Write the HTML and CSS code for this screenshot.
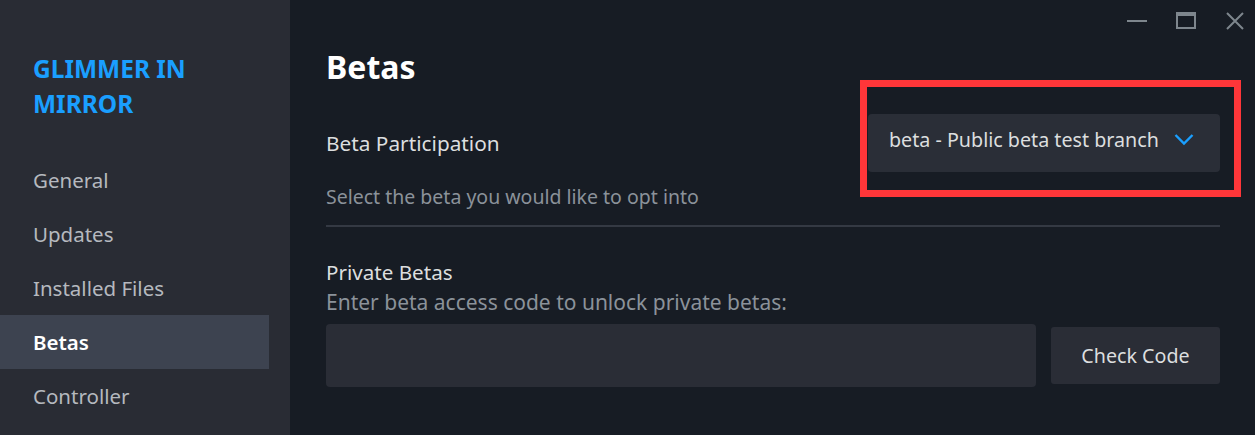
FILE: index.html
```html
<!DOCTYPE html>
<html lang="en">
<head>
  <meta charset="UTF-8" />
  <title>Betas</title>
  <link rel="stylesheet" href="styles.css">
</head>
<body>

<div class="window">
  <!-- Sidebar -->
  <div class="sidebar">
    <h1 class="game-title">GLIMMER IN<br>MIRROR</h1>
    <ul class="nav">
      <li>General</li>
      <li>Updates</li>
      <li>Installed Files</li>
      <li class="active">Betas</li>
      <li>Controller</li>
    </ul>
  </div>

  <!-- Main -->
  <div class="main">
    <div class="titlebar">
      <span class="ctrl">
        <svg width="22" height="22" viewBox="0 0 22 22"><line x1="1" y1="11" x2="21" y2="11" stroke="#7e868d" stroke-width="2"/></svg>
      </span>
      <span class="ctrl">
        <svg width="22" height="22" viewBox="0 0 22 22"><rect x="2" y="3" width="18" height="15" fill="none" stroke="#7e868d" stroke-width="2"/><line x1="1" y1="4.5" x2="21" y2="4.5" stroke="#7e868d" stroke-width="3"/></svg>
      </span>
      <span class="ctrl">
        <svg width="22" height="22" viewBox="0 0 22 22"><path d="M3 3 L19 19 M19 3 L3 19" stroke="#7e868d" stroke-width="2"/></svg>
      </span>
    </div>

    <div class="content">
      <h2>Betas</h2>

      <div class="row">
        <div class="label">Beta Participation</div>
        <div class="dropdown">
          <span>beta - Public beta test branch</span>
          <svg width="20" height="13" viewBox="0 0 20 13"><path d="M1.5 2 L10 10.5 L18.5 2" fill="none" stroke="#1a9fff" stroke-width="2.4"/></svg>
        </div>
      </div>
      <div class="desc">Select the beta you would like to opt into</div>

      <hr class="sep">

      <div class="label private">Private Betas</div>
      <div class="desc code-desc">Enter beta access code to unlock private betas:</div>
      <div class="code-row">
        <input type="text" class="code-input">
        <button class="check-btn">Check Code</button>
      </div>
    </div>
  </div>
</div>

</body>
</html>
```

FILE: styles.css
```css
body {
  margin: 0;
  background: #171c24;
  font-family: 'Noto Sans', sans-serif;
  overflow: hidden;
}

.window {
  display: flex;
  height: 435px;
}

.sidebar {
  width: 290px;
  flex-shrink: 0;
  background: #292c34;
  padding-top: 51px;
  box-sizing: border-box;
}

.game-title {
  margin: 0 0 0 33px;
  color: #1a9fff;
  font-size: 24.5px;
  font-weight: bold;
  line-height: 35px;
}

.nav {
  list-style: none;
  margin: 32px 0 0 0;
  padding: 0;
  width: 269px;
}

.nav li {
  height: 54px;
  line-height: 54px;
  padding-left: 33px;
  font-size: 20.5px;
  color: #b5b9bf;
}

.nav li.active {
  background: #3d4350;
  color: #ffffff;
  font-weight: 600;
}

.main {
  flex: 1;
  background: #171c24;
}

.titlebar {
  display: flex;
  justify-content: flex-end;
  gap: 27px;
  padding: 10px 9px 0 0;
  height: 30px;
}

.ctrl {
  display: flex;
}

.content {
  padding: 0 35px 0 36px;
}

h2 {
  margin: 5px 0 0 0;
  color: #ffffff;
  font-size: 32px;
  font-weight: bold;
  line-height: 44px;
}

.row {
  display: flex;
  justify-content: space-between;
  align-items: center;
  margin-top: 25px;
}

.label {
  color: #dcdedf;
  font-size: 20.8px;
  line-height: 26px;
}

/* red highlight drawn around the dropdown */
.dropdown {
  position: relative;
  display: flex;
  align-items: center;
  gap: 15px;
  width: 352px;
  height: 58px;
  box-sizing: border-box;
  padding: 0 20px 8px 21px;
  background: #2a2e37;
  border-radius: 4px;
  color: #dcdedf;
  font-size: 19.7px;
}

.dropdown::after {
  content: "";
  position: absolute;
  top: -34px;
  left: -8px;
  right: -21px;
  bottom: -25px;
  border: 7px solid #ff3639;
}

.desc {
  margin-top: 12px;
  color: #8b929a;
  font-size: 19.5px;
  line-height: 26px;
}

.sep {
  border: none;
  border-top: 2px solid #343943;
  margin: 15px 0 0 0;
}

.label.private {
  margin-top: 32px;
  font-size: 20.6px;
}

.desc.code-desc {
  margin-top: 4px;
  font-size: 21px;
}

.code-row {
  display: flex;
  align-items: center;
  gap: 15px;
  margin-top: 9px;
}

.code-input {
  flex: 1;
  height: 63px;
  box-sizing: border-box;
  background: #2a2d36;
  border: none;
  border-radius: 4px;
}

.check-btn {
  width: 169px;
  height: 57px;
  background: #2a2d36;
  border: none;
  border-radius: 3px;
  color: #dcdedf;
  font-family: 'Noto Sans', sans-serif;
  font-size: 19.7px;
}
```
